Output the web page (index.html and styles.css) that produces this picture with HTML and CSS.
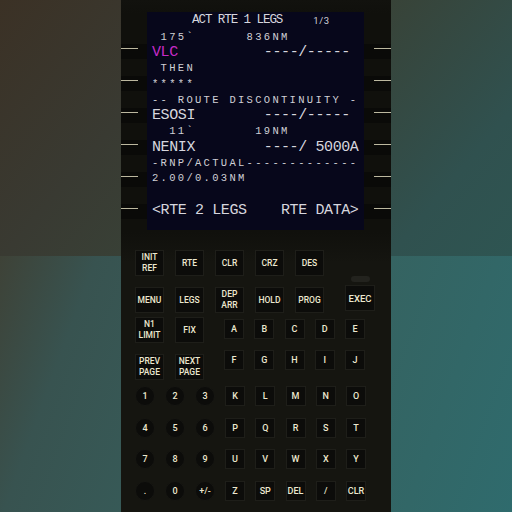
FILE: index.html
```html
<!DOCTYPE html>
<html>
<head>
<meta charset="utf-8">
<link rel="stylesheet" href="styles.css">
</head>
<body>
<div class="page">
  <div class="panel">
    <div class="display">
      <div class="lsk-col left">
        <div class="lsk"><i></i></div>
        <div class="lsk"><i></i></div>
        <div class="lsk"><i></i></div>
        <div class="lsk"><i></i></div>
        <div class="lsk"><i></i></div>
        <div class="lsk"><i></i></div>
      </div>
      <div class="screen">
        <div class="title"><span class="title-text">ACT RTE 1 LEGS</span><span class="pg">1/3</span></div>
        <div class="row sm"> 175`      836NM</div>
        <div class="row lg"><span class="mag">VLC</span>          ----/-----</div>
        <div class="row sm"> THEN</div>
        <div class="row sm">*****</div>
        <div class="row sm">-- ROUTE DISCONTINUITY -</div>
        <div class="row lg">ESOSI        ----/-----</div>
        <div class="row sm">  11`       19NM</div>
        <div class="row lg">NENIX        ----/ 5000A</div>
        <div class="row sm">-RNP/ACTUAL-------------</div>
        <div class="row sm">2.00/0.03NM</div>
        <div class="row sm"> </div>
        <div class="row lg">&lt;RTE 2 LEGS    RTE DATA&gt;</div>
      </div>
      <div class="lsk-col right">
        <div class="lsk"><i></i></div>
        <div class="lsk"><i></i></div>
        <div class="lsk"><i></i></div>
        <div class="lsk"><i></i></div>
        <div class="lsk"><i></i></div>
        <div class="lsk"><i></i></div>
      </div>
    </div>

    <div class="keypad">
      <div class="krow">
        <div class="key">INIT<br>REF</div>
        <div class="key">RTE</div>
        <div class="key">CLR</div>
        <div class="key">CRZ</div>
        <div class="key">DES</div>
      </div>
      <div class="krow row2">
        <div class="key">MENU</div>
        <div class="key">LEGS</div>
        <div class="key">DEP<br>ARR</div>
        <div class="key">HOLD</div>
        <div class="key">PROG</div>
        <div class="exec-wrap">
          <div class="light"></div>
          <div class="key exec">EXEC</div>
        </div>
      </div>
      <div class="mid">
        <div class="mid-left">
          <div class="krow">
            <div class="key">N1<br>LIMIT</div>
            <div class="key">FIX</div>
          </div>
          <div class="krow">
            <div class="key">PREV<br>PAGE</div>
            <div class="key">NEXT<br>PAGE</div>
          </div>
        </div>
        <div class="mid-right">
          <div class="lrow">
            <div class="lkey">A</div><div class="lkey">B</div><div class="lkey">C</div><div class="lkey">D</div><div class="lkey">E</div>
          </div>
          <div class="lrow">
            <div class="lkey">F</div><div class="lkey">G</div><div class="lkey">H</div><div class="lkey">I</div><div class="lkey">J</div>
          </div>
        </div>
      </div>
      <div class="bottom">
        <div class="brow">
          <div class="nkey">1</div><div class="nkey">2</div><div class="nkey">3</div>
          <div class="lkey">K</div><div class="lkey">L</div><div class="lkey">M</div><div class="lkey">N</div><div class="lkey">O</div>
        </div>
        <div class="brow">
          <div class="nkey">4</div><div class="nkey">5</div><div class="nkey">6</div>
          <div class="lkey">P</div><div class="lkey">Q</div><div class="lkey">R</div><div class="lkey">S</div><div class="lkey">T</div>
        </div>
        <div class="brow">
          <div class="nkey">7</div><div class="nkey">8</div><div class="nkey">9</div>
          <div class="lkey">U</div><div class="lkey">V</div><div class="lkey">W</div><div class="lkey">X</div><div class="lkey">Y</div>
        </div>
        <div class="brow">
          <div class="nkey">.</div><div class="nkey">0</div><div class="nkey">+/-</div>
          <div class="lkey">Z</div><div class="lkey">SP</div><div class="lkey">DEL</div><div class="lkey">/</div><div class="lkey">CLR</div>
        </div>
      </div>
    </div>
  </div>
</div>
</body>
</html>
```
FILE: styles.css
```css
html, body {
  margin: 0;
  padding: 0;
}

.page {
  width: 512px;
  height: 512px;
  display: flex;
  justify-content: center;
  background:
    linear-gradient(130deg, #3b3125 0%, #393a32 30%, #384338 54%, #30514f 83%, #2e5552 100%) top / 100% 50% no-repeat,
    linear-gradient(110deg, #3e4237 0%, #385350 16%, #356361 65%, #2f6b6d 100%) bottom / 100% 50% no-repeat;
  overflow: hidden;
}

.panel {
  width: 270px;
  height: 512px;
  background: linear-gradient(#12120e 0, #10100c 14px, #10100c 232px, #151510 262px, #151510 100%);
}

.display {
  display: flex;
  padding-top: 12px;
  height: 218px;
}

.lsk-col {
  display: flex;
  flex-direction: column;
  padding-top: 32px;
}

.lsk-col.left {
  width: 26px;
}

.lsk-col.right {
  width: 27px;
}

.lsk {
  flex-shrink: 0;
  height: 15px;
  margin-bottom: 17px;
  background: #0a0a08;
  display: flex;
  padding-top: 4px;
  box-sizing: border-box;
}

.right .lsk {
  justify-content: flex-end;
}

.lsk i {
  display: block;
  width: 17px;
  height: 1px;
  background: #bcb89f;
}

.screen {
  width: 217px;
  height: 218px;
  background: #07071b;
  padding-left: 5px;
  box-sizing: border-box;
  color: #d6d6de;
  font-family: "Liberation Mono", monospace;
  overflow: hidden;
}

.title {
  height: 17.5px;
  line-height: 17px;
  font-size: 12.5px;
  letter-spacing: -1.05px;
  white-space: pre;
  display: flex;
}

.title-text {
  margin-left: 40px;
}

.pg {
  margin-left: 31px;
  font-family: Roboto, "Noto Sans", sans-serif;
  font-size: 9.5px;
  letter-spacing: 0.6px;
  color: #d0d0d8;
}

.row {
  height: 15.75px;
  line-height: 15.75px;
  white-space: pre;
}

.row.lg {
  font-size: 15px;
  letter-spacing: -0.4px;
}

.row.sm {
  font-size: 10.5px;
  letter-spacing: 2.3px;
  color: #d0d0d6;
}

.mag {
  color: #c62bc8;
}

.keypad {
  padding: 20px 0 0 14px;
  font-family: Roboto, "Noto Sans", sans-serif;
  font-weight: 500;
  color: #ece8cf;
}

.krow {
  display: flex;
  gap: 11px;
}

.row2 {
  margin-top: 11px;
  align-items: flex-start;
}

.key {
  width: 29px;
  height: 26px;
  box-sizing: border-box;
  background: #0c0c0a;
  border: 1px solid #1e1e19;
  display: flex;
  align-items: center;
  justify-content: center;
  text-align: center;
  font-size: 8.5px;
  line-height: 11px;
}

.exec-wrap {
  margin-left: 10px;
  margin-top: -11px;
  display: flex;
  flex-direction: column;
  align-items: center;
  gap: 3px;
}

.light {
  width: 19px;
  height: 6px;
  border-radius: 3px;
  background: #23231e;
}

.key.exec {
  width: 30px;
  font-size: 9.5px;
}

.mid {
  display: flex;
  margin-top: 4px;
}

.mid-left {
  display: flex;
  flex-direction: column;
  gap: 11px;
}

.mid-right {
  margin-left: 20px;
  margin-top: 2px;
  display: flex;
  flex-direction: column;
  gap: 11px;
}

.lrow {
  display: flex;
  gap: 10.25px;
}

.lkey, .nkey {
  width: 20px;
  height: 20px;
  box-sizing: border-box;
  background: #0c0c0a;
  border: 1px solid #1e1e19;
  display: flex;
  align-items: center;
  justify-content: center;
  font-size: 9px;
}

.nkey {
  border-radius: 50%;
  border-color: #161612;
}

.bottom {
  margin-top: 6px;
  display: flex;
  flex-direction: column;
  gap: 11.67px;
}

.brow {
  display: flex;
  gap: 10px;
}

.brow .lkey {
  margin-right: 0.25px;
}
```
